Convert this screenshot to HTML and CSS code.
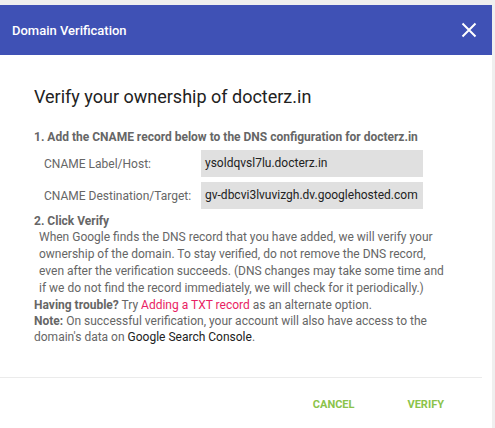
FILE: index.html
```html
<!DOCTYPE html>
<html>
<head>
<meta charset="utf-8">
<link rel="stylesheet" href="styles.css">
</head>
<body>
<div class="dialog">
  <div class="header">
    <span class="title">Domain Verification</span>
    <svg class="close" width="16" height="16" viewBox="0 0 16 16"><path d="M1.5 1.5 L14.5 14.5 M14.5 1.5 L1.5 14.5" stroke="#fff" stroke-width="2" fill="none"/></svg>
  </div>
  <div class="content">
    <h2 class="heading">Verify your ownership of docterz.in</h2>
    <div class="step">1. Add the CNAME record below to the DNS configuration for docterz.in</div>
    <div class="rows">
      <div class="row"><span class="label">CNAME Label/Host:</span><span class="value">ysoldqvsl7lu.docterz.in</span></div>
      <div class="row"><span class="label">CNAME Destination/Target:</span><span class="value">gv-dbcvi3lvuvizgh.dv.googlehosted.com</span></div>
    </div>
    <div class="step step2">2. Click Verify</div>
    <p class="para">When Google finds the DNS record that you have added, we will verify your ownership of the domain. To stay verified, do not remove the DNS record, even after the verification succeeds. (DNS changes may take some time and if we do not find the record immediately, we will check for it periodically.)</p>
    <p class="line"><b>Having trouble?</b> Try <span class="link">Adding a TXT record</span> as an alternate option.</p>
    <p class="line"><b>Note:</b> On successful verification, your account will also have access to the domain's data on <span class="dark">Google Search Console</span>.</p>
  </div>
  <div class="sep"></div>
  <div class="footer">
    <span class="btn">CANCEL</span>
    <span class="btn">VERIFY</span>
  </div>
</div>
</body>
</html>
```
FILE: styles.css
```css
html, body {
  margin: 0;
  padding: 0;
}
body {
  background: #efefef;
  font-family: Roboto, "Liberation Sans", sans-serif;
  height: 428px;
  overflow: hidden;
}
.dialog {
  margin-top: 5px;
  width: 492px;
  height: 423px;
  background: #fff;
}
.header {
  height: 50px;
  background: #3f51b5;
  display: flex;
  align-items: center;
  justify-content: space-between;
  padding: 0 15px 0 12px;
}
.title {
  color: #fff;
  font-size: 13px;
  font-weight: 500;
}
.close {
  display: block;
}
.content {
  padding: 0 46px 0 34px;
  color: #666;
  font-size: 12px;
}
.heading {
  margin: 31px 0 0;
  font-size: 18px;
  font-weight: 400;
  line-height: 22px;
  color: #222;
}
.step {
  margin-top: 21px;
  font-weight: 700;
  line-height: 16px;
  color: #666;
}
.rows {
  margin-top: 5px;
  display: flex;
  flex-direction: column;
  gap: 5px;
  padding-left: 10px;
}
.row {
  display: flex;
  align-items: center;
}
.label {
  width: 157px;
  color: #666;
}
.value {
  width: 218px;
  height: 27px;
  line-height: 27px;
  background: #e0e0e0;
  padding-left: 4px;
  color: #222;
  white-space: nowrap;
}
.step2 {
  margin-top: 4px;
}
.para {
  margin: 0;
  padding-left: 5px;
  line-height: 17px;
  color: #666;
}
.line {
  margin: 0;
  line-height: 16px;
  color: #666;
}
.line b {
  font-weight: 700;
}
.link {
  color: #e91e63;
}
.dark {
  color: #222;
}
.sep {
  margin-top: 32px;
  width: 482px;
  height: 1px;
  background: #ebebeb;
}
.footer {
  display: flex;
  justify-content: flex-end;
  gap: 21px;
  padding: 19px 32px 0 0;
}
.btn {
  padding: 0 16px;
  font-size: 11px;
  font-weight: 700;
  line-height: 16px;
  color: #8bc34a;
}
```
